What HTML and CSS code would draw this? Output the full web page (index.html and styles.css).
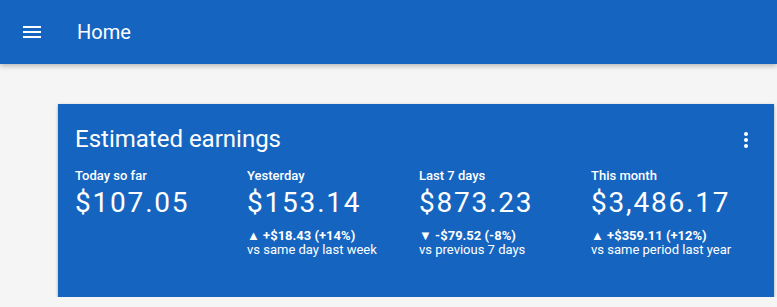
FILE: index.html
```html
<!DOCTYPE html>
<html lang="en">
<head>
    <meta charset="UTF-8">
    <meta name="viewport" content="width=device-width, initial-scale=1.0">
    <title>Home</title>
    <link rel="stylesheet" href="styles.css">
</head>
<body>

    <div class="header">
        <svg class="menu-icon" viewBox="0 0 24 24" width="24" height="24">
            <path d="M3 18h18v-2H3v2zm0-5h18v-2H3v2zm0-7v2h18V6H3z" fill="#fff"/>
        </svg>
        <h1>Home</h1>
    </div>

    <div class="container">
        <div class="card">
            <div class="card-top">
                <h2>Estimated earnings</h2>
                <!-- menu de la tarjeta -->
                <svg class="more-icon" viewBox="0 0 24 24" width="24" height="24">
                    <circle cx="12" cy="6" r="2" fill="#fff"/>
                    <circle cx="12" cy="12" r="2" fill="#fff"/>
                    <circle cx="12" cy="18" r="2" fill="#fff"/>
                </svg>
            </div>

            <div class="stats">
                <div class="stat">
                    <div class="stat-label">Today so far</div>
                    <div class="stat-value">$107.05</div>
                </div>
                <div class="stat">
                    <div class="stat-label">Yesterday</div>
                    <div class="stat-value">$153.14</div>
                    <div class="stat-change">&#9650; +$18.43 (+14%)</div>
                    <div class="stat-compare">vs same day last week</div>
                </div>
                <div class="stat">
                    <div class="stat-label">Last 7 days</div>
                    <div class="stat-value">$873.23</div>
                    <div class="stat-change">&#9660; -$79.52 (-8%)</div>
                    <div class="stat-compare">vs previous 7 days</div>
                </div>
                <div class="stat">
                    <div class="stat-label">This month</div>
                    <div class="stat-value">$3,486.17</div>
                    <div class="stat-change">&#9650; +$359.11 (+12%)</div>
                    <div class="stat-compare">vs same period last year</div>
                </div>
            </div>
        </div>
    </div>

</body>
</html>
```

FILE: styles.css
```css
body {
    font-family: 'Roboto', 'Liberation Sans', sans-serif;
    background-color: #f5f5f5;
    margin: 0;
    padding: 0;
    color: #fff;
}

.header {
    display: flex;
    align-items: center;
    height: 64px;
    padding-left: 20px;
    background-color: #1565c0;
    box-shadow: 0 2px 5px rgba(0, 0, 0, 0.26);
    position: relative;
    z-index: 10;
}

.menu-icon {
    display: block;
    margin-right: 33px;
}

.header h1 {
    font-size: 20px;
    font-weight: 400;
    margin: 0;
    line-height: 28px;
}

.container {
    padding: 40px 3px 0 58px;
}

.card {
    background-color: #1565c0;
    box-shadow: 0 1px 3px rgba(0, 0, 0, 0.25), 0 2px 2px rgba(0, 0, 0, 0.12);
    padding: 19px 16px 40px 17px;
}

.card-top {
    display: flex;
    justify-content: space-between;
    align-items: center;
}

.card-top h2 {
    font-size: 24px;
    font-weight: 400;
    line-height: 32px;
    margin: 0;
}

.more-icon {
    display: block;
    margin-top: 2px;
}

.stats {
    display: grid;
    grid-template-columns: repeat(4, 172px);
    margin-top: 11px;
}

.stat-label {
    font-size: 13px;
    font-weight: 500;
    line-height: 20px;
}

.stat-value {
    font-size: 28px;
    letter-spacing: 1.8px;
    line-height: 34px;
    margin-bottom: 9px;
}

.stat-change {
    font-size: 13px;
    font-weight: 700;
    line-height: 14px;
}

.stat-compare {
    font-size: 13px;
    font-weight: 400;
    line-height: 14px;
}
```
